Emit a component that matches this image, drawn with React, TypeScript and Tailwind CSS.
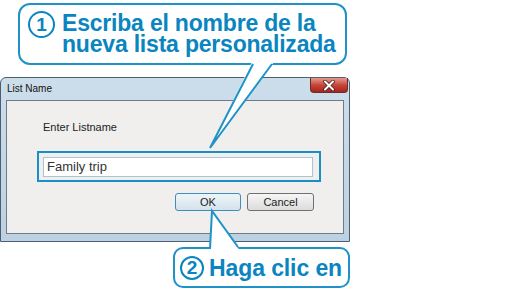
import React from 'react';

const blue = '#0a85bf';

const Circled: React.FC<{ n: string; size: string }> = ({ n, size }) => (
  <span
    className={`inline-flex ${size} shrink-0 items-center justify-center rounded-full border-2 border-[#0a85bf] text-[19px] font-bold leading-none text-[#0a85bf]`}
  >
    {n}
  </span>
);

export default function App() {
  return (
    <div
      className="relative h-[290px] w-[520px] overflow-hidden bg-white"
      style={{ fontFamily: '"Liberation Sans", Arial, sans-serif' }}
    >
      {/* dialog */}
      <div className="pt-[77px]">
        <div className="flex h-[165px] w-[350px] flex-col rounded-t-[6px] border border-[#4d5e70] bg-gradient-to-b from-[#cddeeb] to-[#bcd1e1] px-[5px] pb-[7px]">
          <div className="flex h-[22px] items-start justify-between">
            <span className="pl-[1px] pt-[4px] text-[10px] leading-[14px] text-[#111]">List Name</span>
            <div className="-mr-[4px] flex h-[15px] w-[38px] items-center justify-center rounded-b-[4px] border border-t-0 border-[#6b2b2b] bg-gradient-to-b from-[#e49a8e] via-[#c8443a] to-[#a4261e]">
              <svg width="14" height="11" viewBox="0 0 14 11">
                <path d="M3 1.5 L11 9.5 M11 1.5 L3 9.5" stroke="#4a1a1a" strokeWidth="3.6" strokeLinecap="round" />
                <path d="M3 1.5 L11 9.5 M11 1.5 L3 9.5" stroke="#ffffff" strokeWidth="2" strokeLinecap="round" />
              </svg>
            </div>
          </div>
          <div className="flex flex-1 flex-col border border-[#6f7c88] bg-[#f0efee] pl-[30px] pt-[19px]">
            <span className="ml-[6px] text-[11px] leading-[14px] text-[#222]">Enter Listname</span>
            <div className="mt-[17px] flex h-[31px] w-[284px] items-center border-2 border-[#1a8fc6] pl-[4px] pr-[6px]">
              <div className="flex h-[20px] flex-1 items-center border border-[#abc4d4] bg-white pl-[3px] text-[13px] text-[#333]">
                Family trip
              </div>
            </div>
            <div className="mt-[11px] flex w-[284px] justify-end gap-[6px] pr-[7px]">
              <div className="flex h-[18px] w-[66px] items-center justify-center rounded-[3px] border border-[#3d8fb8] bg-gradient-to-b from-[#eef5f9] to-[#d3e3ec] text-[11px] text-[#222]">
                OK
              </div>
              <div className="flex h-[18px] w-[67px] items-center justify-center rounded-[3px] border border-[#707070] bg-gradient-to-b from-[#f6f6f6] to-[#dcdcdc] text-[11px] text-[#222]">
                Cancel
              </div>
            </div>
          </div>
        </div>
      </div>

      {/* callout 1 */}
      <div className="absolute left-[18px] top-[3px] flex h-[62px] w-[329px] items-start gap-[7px] rounded-[12px] border-2 border-[#1f93c7] bg-white pl-[8px] pt-[8px]">
        <Circled n="1" size="-mt-[2px] h-[27px] w-[27px]" />
        <div className="text-[23px] font-bold tracking-[-0.2px]" style={{ color: blue }}>
          <div className="h-[21px] leading-[21px]">Escriba el nombre de la</div>
          <div className="h-[21px] leading-[21px]">nueva lista personalizada</div>
        </div>
      </div>
      <svg className="absolute left-[200px] top-[60px]" width="80" height="92" viewBox="0 0 80 92">
        <polygon points="52,2 74,2 10,88" fill="#fff" />
        <path d="M53 4 L10 88 L72 4" fill="none" stroke="#1f93c7" strokeWidth="2" strokeLinejoin="miter" />
      </svg>

      {/* callout 2 */}
      <div className="absolute left-[173px] top-[247px] flex h-[41px] w-[177px] items-center gap-[5px] rounded-[10px] border-2 border-[#1f93c7] bg-white pl-[5px]">
        <Circled n="2" size="h-[24px] w-[24px]" />
        <span className="text-[23px] font-bold leading-[24px] tracking-[-0.1px]" style={{ color: blue }}>
          Haga clic en
        </span>
      </div>
      <svg className="absolute left-[200px] top-[205px]" width="50" height="50" viewBox="0 0 50 50">
        <polygon points="12,6 10,46 40,46" fill="#fff" />
        <path d="M10 44 L12 6 L38 42" fill="none" stroke="#1f93c7" strokeWidth="2" />
      </svg>
    </div>
  );
}
